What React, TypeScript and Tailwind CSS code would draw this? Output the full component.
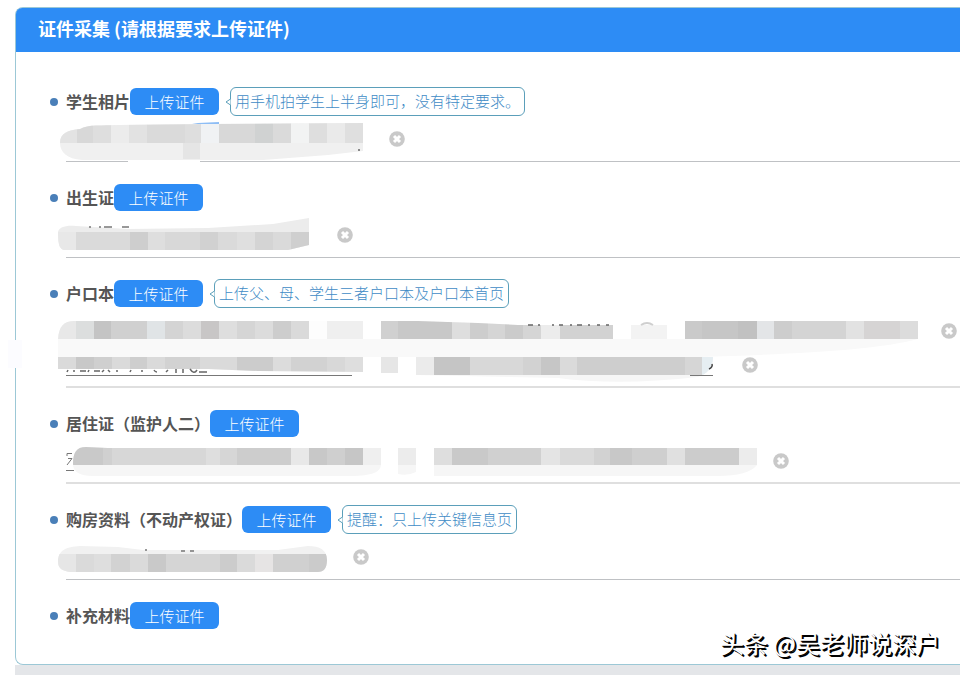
import React from 'react';
import clsx from 'clsx';

// [start x, end x, shade], all in the coordinates of one file line
type Cell = [number, number, string];

interface FileLine {
    width: number;
    top: number;
    bottom: number;
    cells: Cell[];
    outline: string;
    haze: string;
    extra?: React.ReactNode;
}

interface DocumentItem {
    id: string;
    title: string;
    hint?: string;
    softLine?: boolean;
    files: FileLine[];
}

const documents: DocumentItem[] = [
    {
        id: 'photo',
        title: '学生相片',
        hint: '用手机拍学生上半身即可，没有特定要求。',
        files: [
            {
                width: 331,
                top: 0,
                bottom: 21,
                haze: '#f0f0f0',
                outline: 'M2 21C2 11 10 8 22 7C30 2 44 4 60 3L150 2L305 1V29L270 33L205 38H24C9 37 2 30 2 21Z',
                cells: [
                    [0, 19, '#e3e3e3'], [19, 35, '#d8d8d8'], [35, 53, '#dedede'], [53, 71, '#ececec'],
                    [71, 89, '#e2e2e2'], [89, 127, '#dadada'], [127, 143, '#dedede'], [143, 161, '#f0f2f4'],
                    [161, 197, '#d8d8d8'], [197, 215, '#d0d2d2'], [215, 233, '#dadada'], [233, 251, '#f2f3f3'],
                    [251, 269, '#dedede'], [269, 287, '#eaeaea'], [287, 305, '#dfdfdf'],
                ],
                extra: (
                    <>
                        <path d="M70 38H142V41H70Z" fill="#fff" />
                        <path d="M125 21H142V37H125Z" fill="#e5e5e5" />
                        <path d="M134 2L140 1L161 0V2Z" fill="#8dbdf5" />
                        <path d="M300 27H302V29H300Z" fill="#888" />
                    </>
                ),
            },
        ],
    },
    {
        id: 'birth',
        title: '出生证',
        files: [
            {
                width: 279,
                top: 14,
                bottom: 32,
                haze: '#ececec',
                outline: 'M0 14C1 9 8 7 18 8L70 11L150 10L215 6L251 0V27L230 32H6C2 31 0 28 0 14Z',
                cells: [
                    [0, 18, '#e8e8e8'], [18, 72, '#dadada'], [72, 90, '#cecece'], [90, 107, '#dedede'],
                    [107, 142, '#d8d8d8'], [142, 160, '#d1d1d1'], [160, 179, '#dadada'], [179, 197, '#dfdfdf'],
                    [197, 215, '#d4d4d4'], [215, 233, '#dadada'], [233, 251, '#cfcfcf'],
                ],
                extra: <path d="M31 9H33M41 9H43M46 9H54M64 9H71" stroke="#777" strokeWidth="1.5" />,
            },
        ],
    },
    {
        id: 'household',
        title: '户口本',
        hint: '上传父、母、学生三者户口本及户口本首页',
        softLine: true,
        files: [
            {
                width: 883,
                top: 6,
                bottom: 25,
                haze: '#f9f9f9',
                outline: 'M0 25C1 12 6 7 16 7H305V25H323V7H360L420 9L460 11H555V25H573V11H609V25H627V7H860V25C820 36 740 40 640 43H0Z',
                cells: [
                    [0, 18, '#e8e8e8'], [18, 36, '#dcdede'], [36, 53, '#c4c4c4'], [53, 89, '#d0d0d0'],
                    [89, 107, '#e0e4e6'], [107, 125, '#d4d4d4'], [125, 143, '#dcdcdc'], [143, 161, '#c8c6c6'],
                    [161, 179, '#dedede'], [179, 197, '#d5d5d5'], [197, 215, '#dcdcdc'], [215, 233, '#cdcdcd'],
                    [233, 251, '#dadada'], [251, 269, '#fdfdfd'], [269, 305, '#efefef'], [305, 323, '#ffffff'],
                    [323, 340, '#d0d0d0'], [340, 394, '#c8c8c8'], [394, 412, '#dedede'], [412, 430, '#cdcdcd'],
                    [430, 447, '#d5d5d5'], [447, 465, '#cbcbcb'], [465, 483, '#d5d5d5'], [483, 502, '#ececec'],
                    [502, 555, '#d2d2d2'], [573, 609, '#f3f3f3'], [627, 644, '#cacaca'], [644, 680, '#c6c6c6'],
                    [680, 699, '#c1c1c1'], [699, 716, '#e3e5e7'], [716, 734, '#cdcdcd'], [734, 788, '#d4d4d4'],
                    [788, 806, '#e2e2e2'], [806, 842, '#d6d4d4'], [842, 860, '#dcdcdc'],
                ],
                extra: (
                    <>
                        <path d="M470 11H475M480 11H482M494 11H496M501 11H505M512 11H514M519 11H524M530 11H532M539 11H542M548 11H551" stroke="#666" strokeWidth="1.5" />
                        <path d="M583 11Q589 7 595 11" fill="none" stroke="#cfcfcf" strokeWidth="2" />
                    </>
                ),
            },
            {
                width: 684,
                top: 9,
                bottom: 27,
                haze: '#f6f6f6',
                outline: 'M0 9H305V24L200 23L150 21H0ZM323 9H340V25H323ZM358 9H655Q655 24 640 29Q560 38 500 30L358 27Z',
                cells: [
                    [0, 18, '#dadada'], [18, 36, '#c8c8c8'], [36, 54, '#cfcfcf'], [54, 72, '#dadada'],
                    [72, 89, '#cecece'], [89, 107, '#dadada'], [107, 142, '#d2d2d2'], [142, 179, '#dadada'],
                    [179, 215, '#cccccc'], [215, 233, '#dcdcdc'], [233, 269, '#d2d2d2'], [269, 287, '#d8d8d8'],
                    [287, 305, '#dedede'], [323, 340, '#e6e6e6'], [358, 376, '#ebebeb'], [376, 412, '#c5c5c5'],
                    [412, 465, '#d8d8d8'], [465, 483, '#d2d2d2'], [483, 502, '#c6c6c6'], [502, 519, '#dadada'],
                    [519, 627, '#cecece'], [627, 644, '#d6d6d6'], [644, 655, '#e6eef2'],
                ],
                extra: (
                    <>
                        <path d="M8 27.5H294M632 27.5H655" stroke="#777" />
                        <path d="M10 22L9 24M16 22V24M22 23H28M31 22L30 24M36 23H42M46 22L44 24M50 22L52 24M59 22V24M73 22L72 24M84 22V24M96 22Q97 24 99 24M110 22L108 24M118 21V25M125 21V25M132 21Q136 27 139 22M141 24H149" fill="none" stroke="#666" strokeWidth="1.5" />
                        <path d="M654 16Q655 19 651 21" fill="none" stroke="#444" strokeWidth="1.5" />
                    </>
                ),
            },
        ],
    },
    {
        id: 'residence',
        title: '居住证（监护人二）',
        softLine: true,
        files: [
            {
                width: 715,
                top: 2,
                bottom: 21,
                haze: '#f6f6f6',
                outline: 'M15 20C15 9 18 3 28 3L50 4H323V20C323 30 310 32 290 32H35C22 32 15 28 15 20ZM340 4H358V28Q350 32 340 30ZM376 4H699V21Q690 32 660 32H376Z',
                cells: [
                    [15, 45, '#c9c9c9'], [45, 54, '#d0d0d0'], [54, 148, '#d7d7d7'], [148, 162, '#dedede'],
                    [162, 179, '#d6d6d6'], [179, 233, '#cdcdcd'], [233, 251, '#e8e8e8'], [251, 269, '#c8c8c8'],
                    [269, 287, '#cfcfcf'], [287, 305, '#c6c6c6'], [305, 323, '#efefef'], [340, 358, '#ececec'],
                    [376, 394, '#dedede'], [394, 430, '#c9c9c9'], [430, 483, '#d0d0d0'], [483, 502, '#e4e4e4'],
                    [502, 536, '#dadada'], [536, 552, '#d2d2d2'], [552, 574, '#c8c8c8'], [574, 609, '#cfcfcf'],
                    [609, 627, '#e0e0e0'], [627, 681, '#cccccc'], [681, 699, '#ececec'],
                ],
                extra: <path d="M9 12V9.500H14M10 14.500H14L9 21M8 26.500H16" fill="none" stroke="#777" />,
            },
        ],
    },
    {
        id: 'house',
        title: '购房资料（不动产权证）',
        hint: '提醒：只上传关键信息页',
        files: [
            {
                width: 295,
                top: 14,
                bottom: 32,
                haze: '#f1f1f1',
                outline: 'M0 22C0 10 8 7 22 6L60 7L85 10H220L250 6C262 6 269 10 269 20C269 28 266 32 260 32H12C4 31 0 28 0 22Z',
                cells: [
                    [0, 18, '#e6e6e6'], [18, 36, '#dadada'], [36, 53, '#dedede'], [53, 72, '#d2d2d2'],
                    [72, 90, '#dadada'], [90, 108, '#c9c9c9'], [108, 162, '#d5d5d5'], [162, 179, '#cccccc'],
                    [179, 197, '#dadada'], [197, 215, '#e6e4e4'], [215, 251, '#d0d0d0'], [251, 269, '#cbcbcb'],
                ],
                extra: <path d="M87 10H89M123 11H127M132 11H136" stroke="#777" strokeWidth="1.5" />,
            },
        ],
    },
    { id: 'extra', title: '补充材料', files: [] },
];

function CensoredName({ id, file }: { id: string; file: FileLine }) {
    return (
        <svg width={file.width} height="34" className="relative shrink-0 overflow-visible" aria-hidden="true">
            <clipPath id={id}>
                <path d={file.outline} />
            </clipPath>
            <path d={file.outline} fill={file.haze} />
            <g clipPath={`url(#${id})`} shapeRendering="crispEdges">
                {file.cells.map(([start, end, shade]) => (
                    <rect key={start} x={start} y={file.top} width={end - start} height={file.bottom - file.top} fill={shade} />
                ))}
            </g>
            {file.extra}
        </svg>
    );
}

function RemoveButton() {
    return (
        <button type="button" aria-label="删除" className="shrink-0">
            <svg width="16" height="16" viewBox="0 0 16 16" className="block">
                <circle cx="8" cy="8" r="7.800" fill="#c9c9c9" />
                <path d="M5 5L11 11M11 5L5 11" stroke="#fff" strokeWidth="3" />
            </svg>
        </button>
    );
}

function Hint({ text }: { text: string }) {
    return (
        <div className="relative ml-[11px] h-[29px] rounded-md border border-[#5b9fba] bg-white px-1 text-[15px] leading-[26px] font-light whitespace-nowrap text-[#3f8cc6]">
            <svg width="7" height="12" viewBox="0 0 7 12" className="absolute top-2 -left-1.5">
                <path d="M6 0V12H7V0Z" fill="#fff" />
                <path d="M5.500 0V3L1 6L5.500 9V12" fill="#fff" stroke="#5b9fba" />
            </svg>
            {text}
        </div>
    );
}

function DocumentRow({ item }: { item: DocumentItem }) {
    return (
        <li className="pt-[22px]">
            <div className="-ml-4 flex h-[27px] items-center">
                <span className="mr-2 size-2 rounded-full bg-[#4a7fb8]"></span>
                <span id={item.id} className="text-base leading-[27px] font-bold whitespace-nowrap text-[#555]">{item.title}</span>
                <button
                    type="button"
                    aria-describedby={item.id}
                    className="h-[27px] w-[89px] shrink-0 rounded-md bg-[#2d8cf5] text-[15px] leading-[27px] font-light text-white"
                >
                    上传证件
                </button>
                {item.hint && <Hint text={item.hint} />}
            </div>
            {item.files.length > 0 && (
                <div className={clsx('pt-[7px]', item.softLine ? 'border-b-2 border-[#dfdfdf] pb-1' : 'border-b border-[#bfc1c4] pb-[5px]')}>
                    {item.files.map((file, index) => (
                        <div key={index} className="-ml-2 flex h-[34px] items-center">
                            <CensoredName id={`${item.id}-file-${index}`} file={file} />
                            <RemoveButton />
                        </div>
                    ))}
                </div>
            )}
        </li>
    );
}

export default function App() {
    return (
        <div className="relative min-h-screen overflow-hidden bg-white pt-[7px] pl-[15px] font-['Noto_Sans_CJK_SC','Noto_Sans',sans-serif]">
            <div className="bg-[#e4e6e9] pb-[10px]">
                <div className="bg-white">
                    <section className="relative rounded-l-lg border border-r-0 border-[#9cc8d6] bg-white">
                        <h1 className="rounded-tl-md bg-[#2d8cf5] pb-1 pl-[22px] text-lg leading-10 font-bold text-white">
                            证件采集 (请根据要求上传证件)
                        </h1>
                        <ul className="pt-[14px] pb-[35px] pl-[50px]">
                            {documents.map((item) => (
                                <DocumentRow key={item.id} item={item} />
                            ))}
                        </ul>
                        <span className="absolute top-1/2 -left-2 mt-1 h-7 w-[14px] bg-[#fcfcff]"></span>
                    </section>
                </div>
            </div>
            <p className="absolute right-5 bottom-4 text-2xl text-white [text-shadow:1px_1px_0_#000,2px_2px_0_#000]">
                头条 @吴老师说深户
            </p>
        </div>
    );
}
